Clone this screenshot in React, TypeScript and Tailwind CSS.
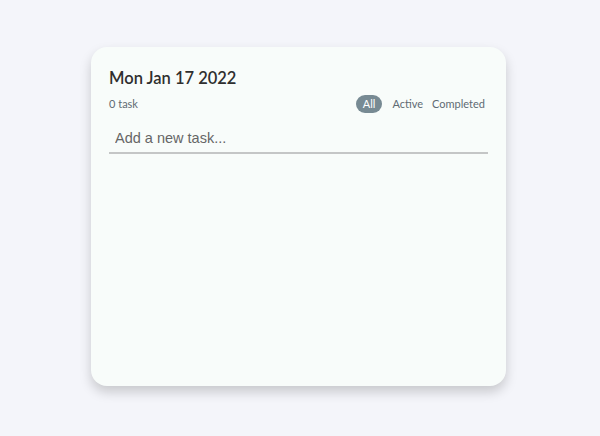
import React, { useState } from "react";

type Filter = "All" | "Active" | "Completed";

export default function App() {
  const [filter, setFilter] = useState<Filter>("All");
  const [text, setText] = useState("");
  const filters: Filter[] = ["All", "Active", "Completed"];

  return (
    <main className="min-h-screen w-full bg-[#f4f5fa] flex justify-center pt-[47px] pr-[3px]">
      <div className="w-[415px] h-[339px] rounded-[16px] bg-[#f8fcfa] shadow-[0_6px_12px_rgba(0,0,0,0.18)] px-[18px] pt-[21px] flex flex-col">
        <h1 className="text-[16.5px] leading-[20px] font-semibold text-[#2f2f2f] font-['Lato','Noto_Sans',sans-serif]">Mon Jan 17 2022</h1>
        <div className="mt-[7px] flex items-center justify-between font-['Lato','Noto_Sans',sans-serif] text-[11px]">
          <span className="text-[#5f6b73]">0 task</span>
          <div className="flex items-center gap-[5px] pr-[1px]">
            {filters.map((f) => (
              <button
                key={f}
                onClick={() => setFilter(f)}
                className={
                  f === filter
                    ? "h-[18px] px-[7px] mr-[3px] rounded-full bg-[#778a93] text-white"
                    : "h-[18px] px-[2px] text-[#5f6b73]"
                }
              >
                {f}
              </button>
            ))}
          </div>
        </div>
        <input
          value={text}
          onChange={(e) => setText(e.target.value)}
          placeholder="Add a new task..."
          className="mt-[11px] w-full h-[30px] px-[6px] bg-transparent border-b-2 border-[#c4c6c6] outline-none text-[14.5px] font-['Liberation_Sans',Arial,sans-serif] text-[#444] placeholder:text-[#666]"
        />
      </div>
    </main>
  );
}
